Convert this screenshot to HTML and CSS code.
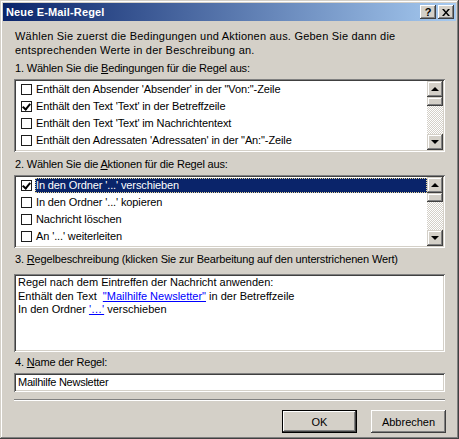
FILE: index.html
```html
<!DOCTYPE html>
<html lang="de">
<head>
    <meta charset="UTF-8">
    <title>Neue E-Mail-Regel</title>
    <link rel="stylesheet" href="styles.css">
</head>
<body>

<div class="window">
    <!-- Title bar -->
    <div class="titlebar">
        <span class="title">Neue E-Mail-Regel</span>
        <div class="title-buttons">
            <span class="tbtn help">?</span>
            <span class="tbtn close">
                <svg width="8" height="7" viewBox="0 0 8 7"><path d="M0 0h2l2 2.5L6 0h2L5 3.5 8 7H6L4 4.5 2 7H0l3-3.5z" fill="#000"/></svg>
            </span>
        </div>
    </div>

    <div class="content">
        <p class="intro">Wählen Sie zuerst die Bedingungen und Aktionen aus. Geben Sie dann die entsprechenden Werte in der Beschreibung an.</p>

        <!-- Conditions -->
        <div class="label first">1. Wählen Sie die <u>B</u>edingungen für die Regel aus:</div>
        <div class="listbox">
            <ul class="rows">
                <li><span class="check"></span><span class="text">Enthält den Absender 'Absender' in der "Von:"-Zeile</span></li>
                <li><span class="check on"></span><span class="text">Enthält den Text 'Text' in der Betreffzeile</span></li>
                <li><span class="check"></span><span class="text">Enthält den Text 'Text' im Nachrichtentext</span></li>
                <li><span class="check"></span><span class="text">Enthält den Adressaten 'Adressaten' in der "An:"-Zeile</span></li>
            </ul>
            <div class="scrollbar">
                <span class="sbtn up"></span>
                <span class="thumb"></span>
                <span class="track"></span>
                <span class="sbtn down"></span>
            </div>
        </div>

        <!-- Actions -->
        <div class="label">2. Wählen Sie die <u>A</u>ktionen für die Regel aus:</div>
        <div class="listbox">
            <ul class="rows">
                <li class="selected"><span class="check on"></span><span class="text">In den Ordner '...' verschieben</span></li>
                <li><span class="check"></span><span class="text">In den Ordner '...' kopieren</span></li>
                <li><span class="check"></span><span class="text">Nachricht löschen</span></li>
                <li><span class="check"></span><span class="text">An '...' weiterleiten</span></li>
            </ul>
            <div class="scrollbar">
                <span class="sbtn up"></span>
                <span class="thumb"></span>
                <span class="track"></span>
                <span class="sbtn down"></span>
            </div>
        </div>

        <!-- Description -->
        <div class="label desc-label">3. <u>R</u>egelbeschreibung (klicken Sie zur Bearbeitung auf den unterstrichenen Wert)</div>
        <div class="description">
            Regel nach dem Eintreffen der Nachricht anwenden:<br>
            Enthält den Text&nbsp; <a href="#">"Mailhilfe Newsletter"</a> in der Betreffzeile<br>
            In den Ordner <a href="#">'…'</a> verschieben
        </div>

        <!-- Name -->
        <div class="label name-label">4. <u>N</u>ame der Regel:</div>
        <div class="field">Mailhilfe Newsletter</div>

        <div class="separator"></div>

        <div class="buttons">
            <button class="btn default">OK</button>
            <button class="btn">Abbrechen</button>
        </div>
    </div>
</div>

</body>
</html>
```

FILE: styles.css
```css
body {
    margin: 0;
    padding: 0;
    background-color: #d4d0c8;
    font-family: "Liberation Sans", Arial, sans-serif;
    font-size: 11px;
    color: #000;
}
.window {
    width: 459px;
    height: 439px;
    box-sizing: border-box;
    padding: 3px;
    background-color: #d4d0c8;
    box-shadow: inset -1px -1px #404040, inset 1px 1px #d4d0c8, inset -2px -2px #808080, inset 2px 2px #fff;
}
.titlebar {
    height: 18px;
    display: flex;
    align-items: center;
    justify-content: space-between;
    padding: 0 2px 0 3px;
    background: linear-gradient(to right, #0a246a, #a6caf0);
}
.title {
    color: #fff;
    font-weight: bold;
    font-size: 11px;
    letter-spacing: 0.15px;
}
.title-buttons {
    display: flex;
    gap: 2px;
}
.tbtn {
    width: 16px;
    height: 14px;
    box-sizing: border-box;
    display: flex;
    align-items: center;
    justify-content: center;
    background-color: #d4d0c8;
    box-shadow: inset -1px -1px #404040, inset 1px 1px #fff, inset -2px -2px #808080;
    font-weight: bold;
    font-size: 11px;
    line-height: 1;
}
.content {
    padding: 0 11px 0 11px;
}
.intro {
    margin: 8px 0 0 1px;
    line-height: 14px;
    letter-spacing: 0.21px;
}
.label {
    margin: 6px 0 4px 1px;
    line-height: 13px;
    letter-spacing: -0.18px;
}
.label.first {
    margin-top: 5px;
}
.label.desc-label {
    margin: 5px 0 8px 1px;
    letter-spacing: -0.16px;
}
.label.name-label {
    margin: 4px 0 4px 1px;
}
.listbox {
    height: 73px;
    box-sizing: border-box;
    display: flex;
    background-color: #fff;
    padding: 2px;
    box-shadow: inset 1px 1px #808080, inset -1px -1px #fff, inset 2px 2px #404040, inset -2px -2px #d4d0c8;
}
.rows {
    flex: 1;
    list-style: none;
    margin: 0;
    padding: 0;
}
.rows li {
    height: 17px;
    display: flex;
    align-items: center;
    padding-left: 5px;
}
.check {
    width: 11px;
    height: 11px;
    box-sizing: border-box;
    border: 1px solid #1c1c1c;
    background-color: #fff;
    margin-right: 3px;
    flex-shrink: 0;
    display: flex;
    align-items: center;
    justify-content: center;
}
.check.on::after {
    content: '';
    width: 3px;
    height: 6px;
    border: solid #000;
    border-width: 0 2px 2px 0;
    transform: translate(0, -1px) rotate(40deg);
}
.text {
    padding: 0 1px;
    line-height: 15px;
    white-space: nowrap;
    letter-spacing: -0.12px;
}
.rows li.selected .text {
    flex: 1;
    background-color: #0a246a;
    color: #fff;
    outline: 1px dotted #e8d898;
    outline-offset: -1px;
}
.scrollbar {
    width: 16px;
    display: flex;
    flex-direction: column;
}
.sbtn, .thumb {
    height: 16px;
    flex-shrink: 0;
    box-sizing: border-box;
    background-color: #d4d0c8;
    box-shadow: inset -1px -1px #404040, inset 1px 1px #d4d0c8, inset -2px -2px #808080, inset 2px 2px #fff;
    display: flex;
    align-items: center;
    justify-content: center;
}
.thumb {
    height: 9px;
}
.track {
    flex: 1;
    background-image: conic-gradient(#fff 25%, #d4d0c8 0 50%, #fff 0 75%, #d4d0c8 0);
    background-size: 2px 2px;
}
.sbtn::after {
    content: '';
    border-left: 4px solid transparent;
    border-right: 4px solid transparent;
}
.sbtn.up::after {
    border-bottom: 4px solid #000;
}
.sbtn.down::after {
    border-top: 4px solid #000;
}
.description {
    height: 78px;
    box-sizing: border-box;
    background-color: #fff;
    padding: 2px 4px;
    line-height: 13.5px;
    box-shadow: inset 1px 1px #808080, inset -1px -1px #fff, inset 2px 2px #404040, inset -2px -2px #d4d0c8;
}
.description a {
    color: #0000ff;
}
.field {
    height: 19px;
    box-sizing: border-box;
    background-color: #fff;
    padding: 3px 4px;
    line-height: 13px;
    letter-spacing: -0.25px;
    box-shadow: inset 1px 1px #808080, inset -1px -1px #fff, inset 2px 2px #404040, inset -2px -2px #d4d0c8;
}
.separator {
    margin-top: 7px;
    border-top: 1px solid #808080;
    border-bottom: 1px solid #fff;
    height: 0;
}
.buttons {
    display: flex;
    justify-content: flex-end;
    gap: 14px;
    margin: 9px -1px 0 0;
}
.btn {
    width: 75px;
    height: 23px;
    box-sizing: border-box;
    border: none;
    background-color: #d4d0c8;
    font-family: "Liberation Sans", Arial, sans-serif;
    font-size: 11px;
    color: #000;
    box-shadow: inset -1px -1px #404040, inset 1px 1px #fff, inset -2px -2px #808080;
}
.btn.default {
    box-shadow: inset 0 0 0 1px #000, inset -2px -2px #404040, inset 2px 2px #fff, inset -3px -3px #808080;
}
```
